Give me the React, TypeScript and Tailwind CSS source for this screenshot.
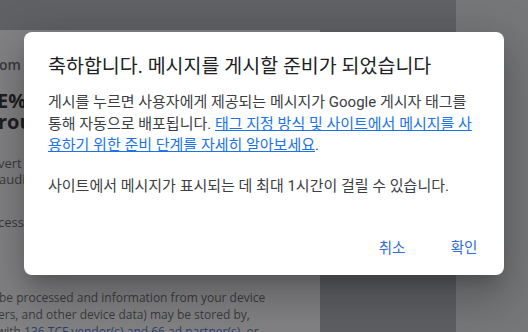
export default function App() {
  return (
    <div className="relative h-[332px] w-[528px] overflow-hidden bg-[#6b6c6f]">
      {/* dimmed page behind the dialog */}
      <div className="flex h-full">
        <div className="flex w-[456px] flex-col">
          <div className="h-[30px] shrink-0 bg-[#606165]" />
          <div className="flex min-h-0 flex-1">
            <div className="w-[320px] overflow-hidden whitespace-nowrap bg-[#828284] pt-[25px] font-['Open_Sans',sans-serif] text-[#3a3a3c]">
              <p className="ml-[-1px] text-[14px] font-semibold leading-[20px]">om</p>
              <div className="mt-[15px] text-[20px] font-bold leading-[21px] text-[#1f1f21]">
                <p className="ml-[-3px]">E%</p>
                <p className="ml-[-2px]">rou</p>
              </div>
              <div className="mt-[23px] text-[13px] leading-[16px]">
                <p className="ml-[-2px]">vert</p>
                <p className="ml-[-1px]">audi</p>
              </div>
              <p className="ml-[-2px] mt-[27px] text-[13px] leading-[16px]">cess</p>
              <div className="mt-[59px] text-[12px] leading-[17px] text-[#3b3b3d]">
                <p className="ml-[-1px]">be processed and information from your device</p>
                <p className="ml-[-2px]">ers, and other device data) may be stored by,</p>
                <p className="ml-[-3px]">
                  with <span className="text-[#2c3f66] underline">136 TCF vendor(s) and 66 ad partner(s)</span>, or
                </p>
              </div>
            </div>
            <div className="flex-1 bg-[#5e5f63]" />
          </div>
        </div>
        <div className="flex-1 bg-[#767779]" />
      </div>

      {/* dialog */}
      <div className="absolute inset-0 flex justify-center pt-[32px]">
        <div className="flex h-[243px] w-[480px] flex-col rounded-[8px] bg-white font-['Roboto','Noto_Sans_CJK_KR',sans-serif] shadow-[0_11px_15px_-7px_rgba(0,0,0,0.2),0_24px_38px_3px_rgba(0,0,0,0.14),0_9px_46px_8px_rgba(0,0,0,0.12)]">
          <div className="px-6 pt-[23px]">
            <h1 className="text-[19.5px] leading-[24px] text-[#202124]">
              축하합니다. 메시지를 게시할 준비가 되었습니다
            </h1>
            <div className="mt-[13px] text-[15px] leading-[21.5px] text-[#3c4043]">
              <p>
                게시를 누르면 사용자에게 제공되는 메시지가 Google 게시자 태그를 통해 자동으로 배포됩니다.{" "}
                <a className="text-[#1a73e8] underline">
                  태그 지정 방식 및 사이트에서 메시지를 사용하기 위한 준비 단계를 자세히 알아보세요
                </a>
                .
              </p>
              <p className="mt-[19px]">사이트에서 메시지가 표시되는 데 최대 1시간이 걸릴 수 있습니다.</p>
            </div>
          </div>
          <div className="mt-auto flex justify-end gap-2 p-2">
            <button className="h-9 min-w-16 px-2 text-[14.5px] text-[#2f6bd0]">취소</button>
            <button className="h-9 min-w-16 px-2 text-[14.5px] text-[#2f6bd0]">확인</button>
          </div>
        </div>
      </div>
    </div>
  );
}
